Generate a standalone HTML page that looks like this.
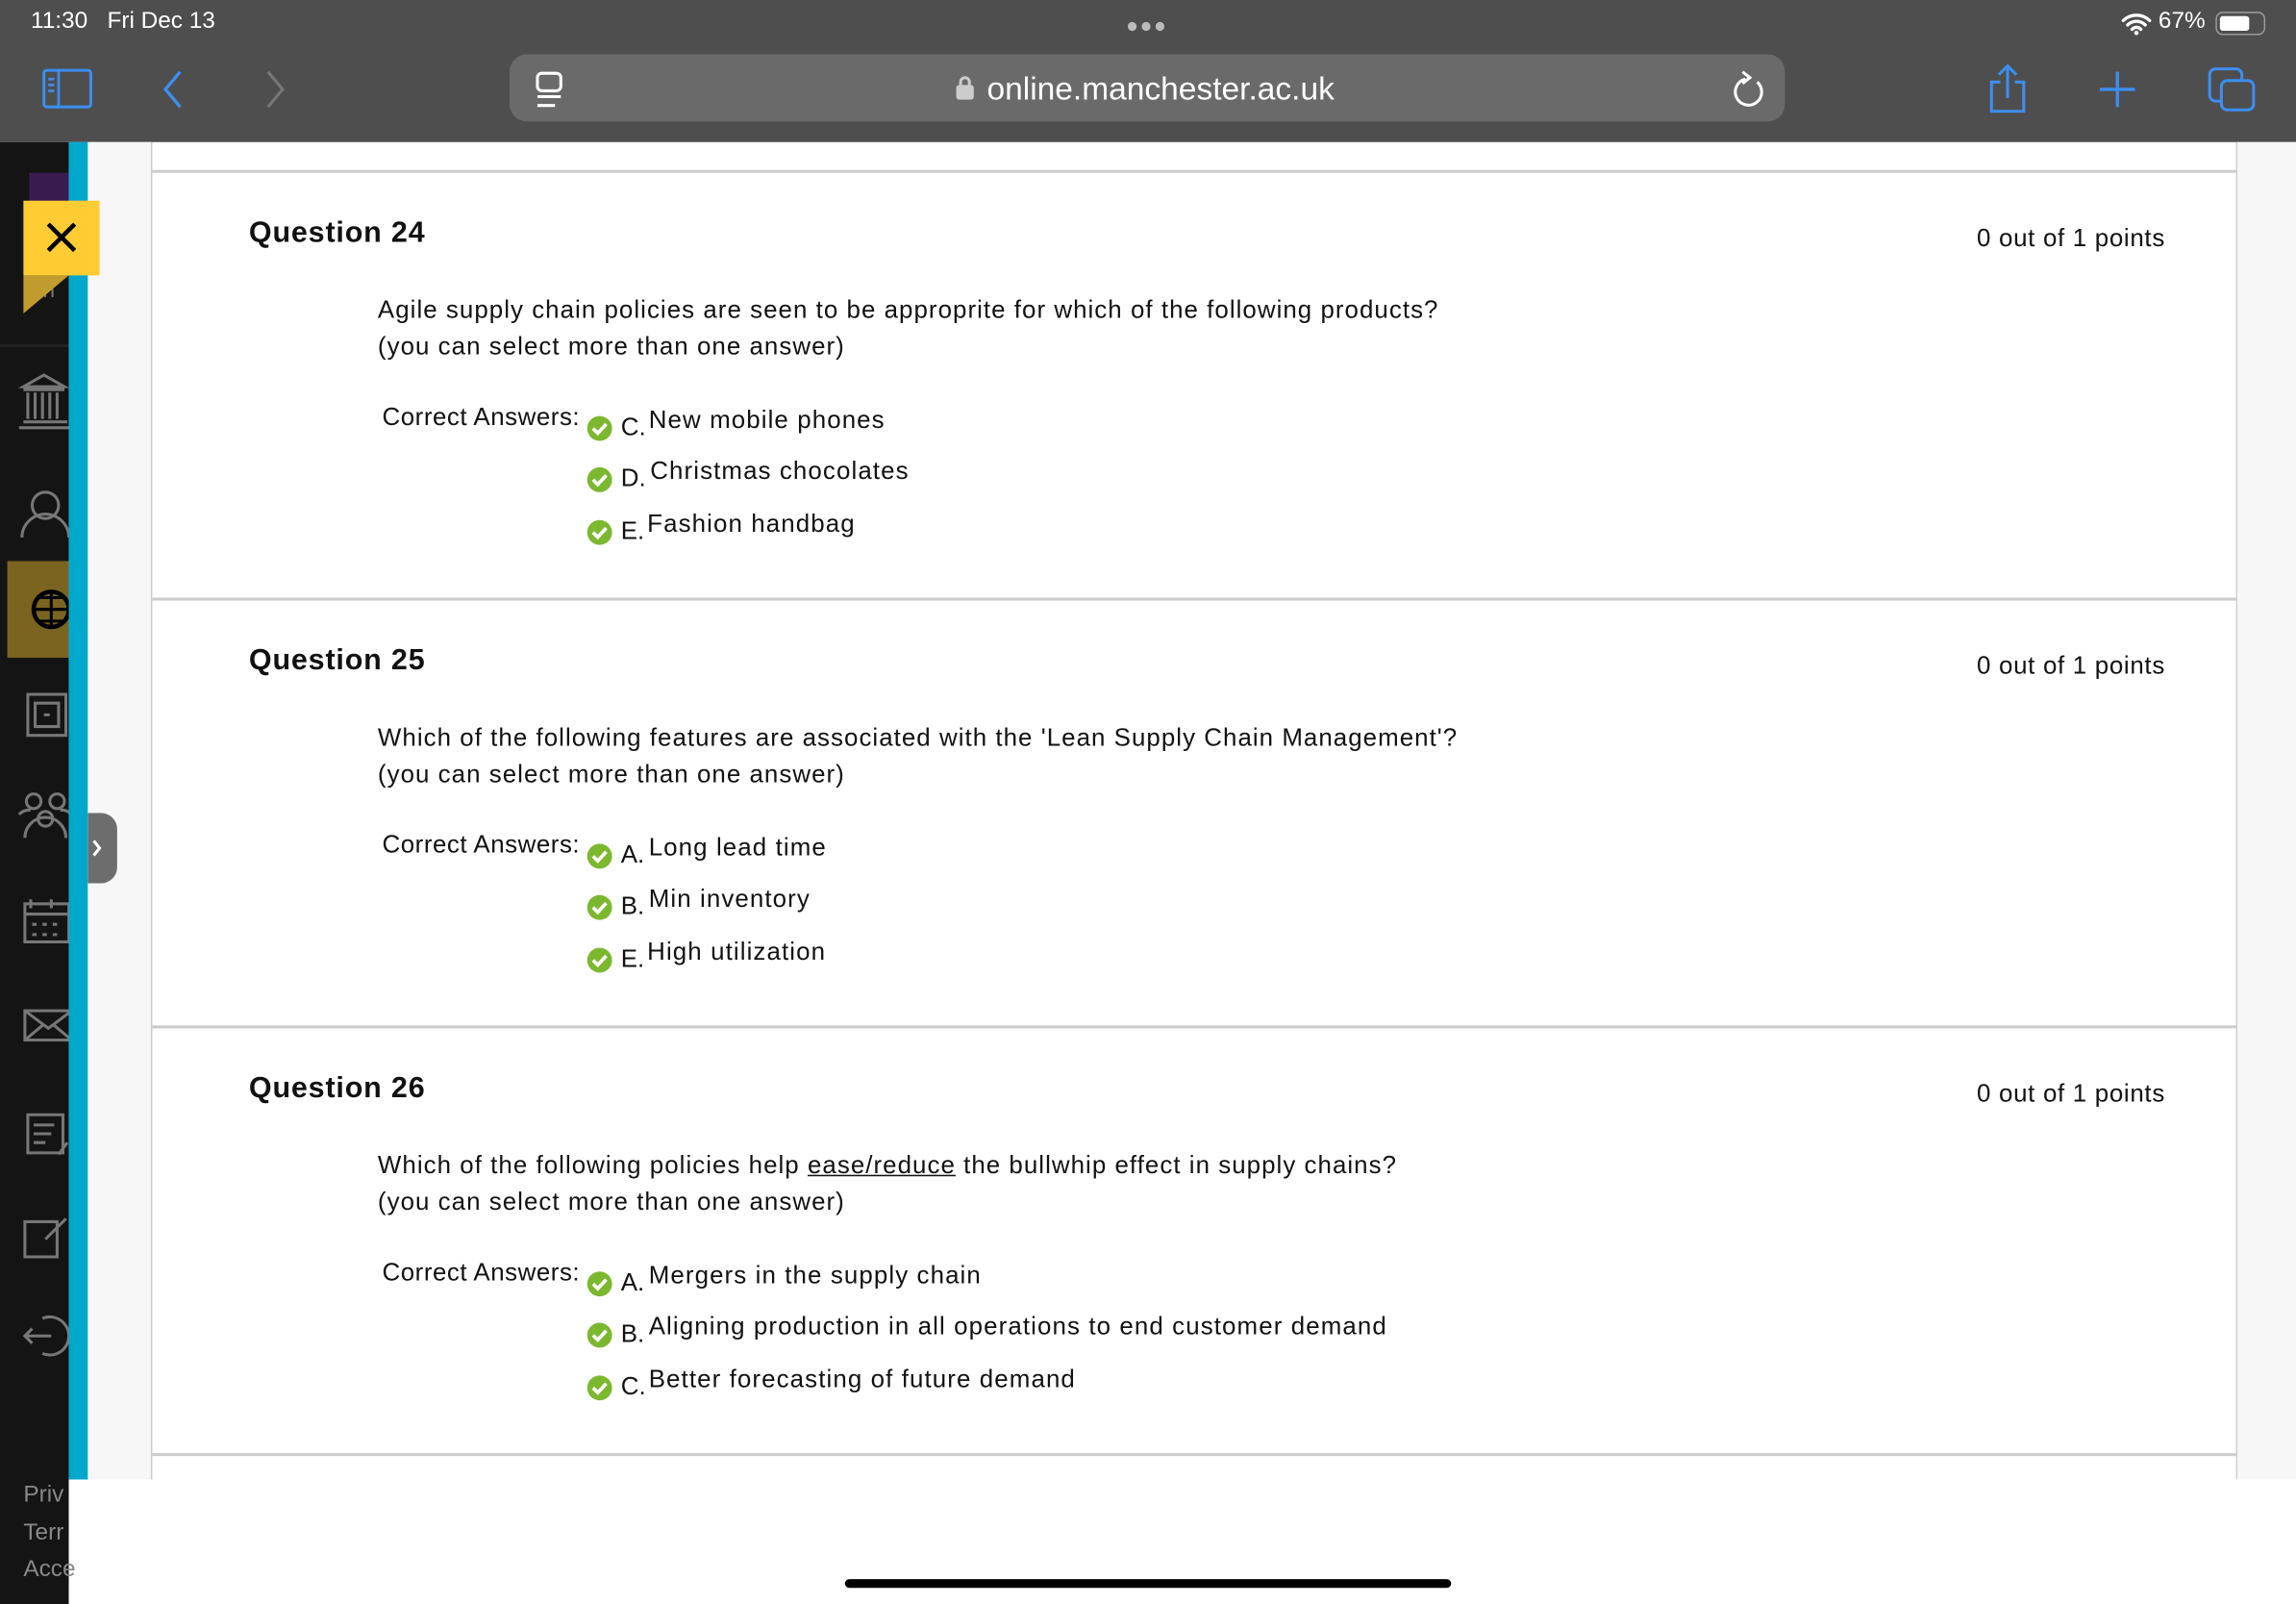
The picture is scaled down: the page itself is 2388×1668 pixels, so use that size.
<!DOCTYPE html>
<html><head><meta charset="utf-8">
<style>
*{margin:0;padding:0;box-sizing:border-box}
html,body{width:2388px;height:1668px;overflow:hidden;background:#fff}
#s{position:absolute;left:0;top:0;width:1568px;height:1095px;transform:scale(1.523,1.5233);transform-origin:0 0;font-family:"Liberation Sans",sans-serif;color:#111}
.a{position:absolute}
.top{left:0;top:0;width:1568px;height:97px;background:#4e4e4e}
.st{color:#fff;font-size:16px;top:6px}
.url{left:348px;top:37px;width:871px;height:46px;background:#6a6a6a;border-radius:12px}
.q{position:absolute;left:104px;width:1423px;height:292px}
.q h2{position:absolute;left:66px;top:29px;font-size:20px;font-weight:bold;line-height:24px;letter-spacing:0.55px}
.pts{position:absolute;left:1246px;top:35px;font-size:17px;line-height:20px;letter-spacing:0.45px}
.qt{position:absolute;left:154px;top:81px;font-size:17px;line-height:25px;letter-spacing:0.68px}
.lab{position:absolute;left:157px;top:157px;font-size:17px;line-height:20px;letter-spacing:0.35px}
.ans{position:absolute;left:296px;font-size:17px;line-height:20px;height:36px;width:800px;letter-spacing:0.72px}
.ans svg{position:absolute;left:0;top:7px}
.ans .l{position:absolute;left:24px;top:6px;letter-spacing:0}
.ans .t{position:absolute;left:43px;top:1px}
</style></head><body><div id="s">
<div class="a top"></div>
<div class="a st" style="left:21px">11:30&nbsp;&nbsp;&nbsp;Fri Dec 13</div>
<div class="a" style="left:769px;top:9px;color:#bbb;font-size:14px;letter-spacing:1px">●●●</div>
<div class="a st" style="left:1474px">67%</div>
<svg class="a" style="left:1448px;top:8px" width="22" height="16" viewBox="0 0 22 16"><path d="M2 6a13 13 0 0 1 18 0M5 9a8.5 8.5 0 0 1 12 0M8 12a4 4 0 0 1 6 0" stroke="#fff" stroke-width="2.2" fill="none" stroke-linecap="round"/><circle cx="11" cy="14.5" r="1.5" fill="#fff"/></svg>
<div class="a" style="left:1513px;top:8px;width:34px;height:16px;border:1.5px solid #999;border-radius:5px"></div>
<div class="a" style="left:1516px;top:11px;width:20px;height:10px;background:#fff;border-radius:2px"></div>
<svg class="a" style="left:28px;top:46px" width="38" height="30" viewBox="0 0 38 30"><rect x="2" y="2" width="32" height="25" rx="2" stroke="#3d8ef0" stroke-width="2" fill="none"/><path d="M12 2v25M5 8h4M5 12h4M5 16h4" stroke="#3d8ef0" stroke-width="1.8"/></svg>
<svg class="a" style="left:108px;top:46px" width="20" height="30"><path d="M15 3L5 15l10 12" stroke="#3d8ef0" stroke-width="2.2" fill="none"/></svg>
<svg class="a" style="left:178px;top:46px" width="20" height="30"><path d="M5 3l10 12L5 27" stroke="#777" stroke-width="2" fill="none"/></svg>
<div class="a url"></div>
<svg class="a" style="left:364px;top:47px" width="24" height="28"><rect x="3" y="3" width="16" height="12" rx="3" stroke="#fff" stroke-width="2" fill="none"/><path d="M3 19h16M3 25h12" stroke="#fff" stroke-width="2"/></svg>
<svg class="a" style="left:652px;top:51px" width="14" height="18"><rect x="1" y="7" width="12" height="10" rx="2" fill="#ccc"/><path d="M4 7V5a3 3 0 0 1 6 0v2" stroke="#ccc" stroke-width="2" fill="none"/></svg>
<div class="a" style="left:674px;top:48px;color:#fff;font-size:22px">online.manchester.ac.uk</div>
<svg class="a" style="left:1182px;top:47px" width="26" height="28"><path d="M18 9a9 9 0 1 1-8-2" stroke="#fff" stroke-width="2" fill="none"/><path d="M8 2l5 4-5 4" stroke="#fff" stroke-width="2" fill="none"/></svg>
<svg class="a" style="left:1356px;top:42px" width="30" height="36"><path d="M15 3v22M9 9l6-6 6 6M10 14H4v20h22V14h-6" stroke="#3d8ef0" stroke-width="2" fill="none"/></svg>
<svg class="a" style="left:1432px;top:46px" width="28" height="30"><path d="M14 3v24M2 15h24" stroke="#3d8ef0" stroke-width="2.2"/></svg>
<svg class="a" style="left:1506px;top:44px" width="36" height="34"><rect x="3" y="3" width="22" height="22" rx="4" stroke="#3d8ef0" stroke-width="2" fill="none"/><rect x="11" y="11" width="22" height="20" rx="4" stroke="#3d8ef0" stroke-width="2" fill="#4e4e4e"/></svg>

<div class="a" style="left:0;top:97px;width:47px;height:998px;background:#141414"></div>
<div class="a" style="left:20px;top:118px;width:27px;height:20px;background:#3a1b4f"></div>
<div class="a" style="left:0;top:235px;width:47px;height:2px;background:#222"></div>
<div class="a" style="left:20px;top:190px;color:#777;font-size:15px">Th</div>
<div class="a" style="left:5px;top:383px;width:42px;height:66px;background:#7a6420"></div>
<div class="a" style="left:47px;top:97px;width:13px;height:913px;background:#00a8cc"></div>
<div class="a" style="left:60px;top:97px;width:43px;height:913px;background:#f7f7f7"></div>
<div class="a" style="left:103px;top:97px;width:1px;height:913px;background:#ccc"></div>
<div class="a" style="left:1527px;top:97px;width:1px;height:913px;background:#ccc"></div>
<div class="a" style="left:1528px;top:97px;width:40px;height:913px;background:#f7f7f7"></div>
<div class="a" style="left:104px;top:116px;width:1423px;height:2px;background:#ccc"></div>
<div class="a" style="left:104px;top:408px;width:1423px;height:2px;background:#ccc"></div>
<div class="a" style="left:104px;top:700px;width:1423px;height:2px;background:#ccc"></div>
<div class="a" style="left:104px;top:992px;width:1423px;height:2px;background:#ccc"></div>
<div class="a" style="left:47px;top:1010px;width:1521px;height:85px;background:#fff"></div>
<div class="a" style="left:16px;top:188px;width:0;height:0;border-left:31px solid #c19b2e;border-bottom:26px solid transparent"></div>
<div class="a" style="left:16px;top:137px;width:52px;height:51px;background:#ffcc33"></div>
<svg class="a" style="left:30px;top:150px" width="24" height="24"><path d="M3 3l18 18M21 3L3 21" stroke="#000" stroke-width="3"/></svg>
<svg class="a" style="left:60px;top:555px" width="21" height="48"><path d="M0 0h9a11 11 0 0 1 11 11v26a11 11 0 0 1-11 11H0z" fill="#6d6d6d"/><path d="M4 19l4 5-4 5" stroke="#fff" stroke-width="2" fill="none"/></svg>
<svg class="a" style="left:0;top:250px" width="47" height="700" fill="none" stroke="#777" stroke-width="2">
<path d="M16 14l14-8 14 8zM16 16h28M19 18v18M24 18v18M29 18v18M34 18v18M39 18v18M16 38h30M13 42h34"/>
<circle cx="31" cy="95" r="9"/><path d="M15 117a16 16 0 0 1 32 0"/>
<circle cx="35" cy="166" r="12" stroke="#000" stroke-width="3"/><path d="M23 166h24M35 154v24M27 158h16M27 174h16" stroke="#000" stroke-width="2"/>
<rect x="19" y="224" width="26" height="28"/><path d="M24 230h16v16H24zM30 238h4"/>
<circle cx="23" cy="297" r="5"/><circle cx="39" cy="297" r="5"/><circle cx="31" cy="309" r="5"/><path d="M17 322a14 14 0 0 1 28 0M13 306a10 10 0 0 1 8-3M41 303a10 10 0 0 1 8 3"/>
<rect x="17" y="367" width="30" height="26"/><path d="M17 374h30M21 364v6M35 364v6M22 381h3M29 381h3M36 381h3M22 388h3M29 388h3M36 388h3"/>
<rect x="17" y="440" width="32" height="20"/><path d="M17 440l16 12 16-12M17 460l12-10M49 460l-12-10"/>
<path d="M19 511h24v26H19zM23 518h14M23 524h12M23 530h8M40 538l6-8"/>
<path d="M17 584h22v24H17zM31 596l14-14"/>
<path d="M29 650a13 13 0 1 1 0 24M17 662h18M22 657l-5 5 5 5"/>
</svg>
<div class="a" style="left:16px;top:1008px;color:#888;font-size:16px;line-height:25.5px">Priv<br>Terr<br>Acce</div>
<div class="a" style="left:577px;top:1078px;width:414px;height:6px;background:#000;border-radius:3px"></div>

<div class="q" style="top:118px">
<h2>Question 24</h2><div class="pts">0 out of 1 points</div>
<div class="qt">Agile supply chain policies are seen to be approprite for which of the following products?<br>(you can select more than one answer)</div>
<div class="lab">Correct Answers:</div>
<div class="ans" style="top:158px"><svg width="19" height="19"><circle cx="9.5" cy="9.5" r="8.5" fill="#7cb82f"/><path d="M5 9.5l3.2 3.2L14 6.5" stroke="#fff" stroke-width="2.4" fill="none"/></svg><span class="l">C.</span><span class="t">New mobile phones</span></div>
<div class="ans" style="top:193px"><svg width="19" height="19"><circle cx="9.5" cy="9.5" r="8.5" fill="#7cb82f"/><path d="M5 9.5l3.2 3.2L14 6.5" stroke="#fff" stroke-width="2.4" fill="none"/></svg><span class="l">D.</span><span class="t" style="left:44px">Christmas chocolates</span></div>
<div class="ans" style="top:229px"><svg width="19" height="19"><circle cx="9.5" cy="9.5" r="8.5" fill="#7cb82f"/><path d="M5 9.5l3.2 3.2L14 6.5" stroke="#fff" stroke-width="2.4" fill="none"/></svg><span class="l">E.</span><span class="t" style="left:42px">Fashion handbag</span></div>
</div>
<div class="q" style="top:410px">
<h2>Question 25</h2><div class="pts">0 out of 1 points</div>
<div class="qt">Which of the following features are associated with the 'Lean Supply Chain Management'?<br>(you can select more than one answer)</div>
<div class="lab">Correct Answers:</div>
<div class="ans" style="top:158px"><svg width="19" height="19"><circle cx="9.5" cy="9.5" r="8.5" fill="#7cb82f"/><path d="M5 9.5l3.2 3.2L14 6.5" stroke="#fff" stroke-width="2.4" fill="none"/></svg><span class="l">A.</span><span class="t">Long lead time</span></div>
<div class="ans" style="top:193px"><svg width="19" height="19"><circle cx="9.5" cy="9.5" r="8.5" fill="#7cb82f"/><path d="M5 9.5l3.2 3.2L14 6.5" stroke="#fff" stroke-width="2.4" fill="none"/></svg><span class="l">B.</span><span class="t">Min inventory</span></div>
<div class="ans" style="top:229px"><svg width="19" height="19"><circle cx="9.5" cy="9.5" r="8.5" fill="#7cb82f"/><path d="M5 9.5l3.2 3.2L14 6.5" stroke="#fff" stroke-width="2.4" fill="none"/></svg><span class="l">E.</span><span class="t" style="left:42px">High utilization</span></div>
</div>
<div class="q" style="top:702px">
<h2>Question 26</h2><div class="pts">0 out of 1 points</div>
<div class="qt">Which of the following policies help <u>ease/reduce</u> the bullwhip effect in supply chains?<br>(you can select more than one answer)</div>
<div class="lab">Correct Answers:</div>
<div class="ans" style="top:158px"><svg width="19" height="19"><circle cx="9.5" cy="9.5" r="8.5" fill="#7cb82f"/><path d="M5 9.5l3.2 3.2L14 6.5" stroke="#fff" stroke-width="2.4" fill="none"/></svg><span class="l">A.</span><span class="t">Mergers in the supply chain</span></div>
<div class="ans" style="top:193px"><svg width="19" height="19"><circle cx="9.5" cy="9.5" r="8.5" fill="#7cb82f"/><path d="M5 9.5l3.2 3.2L14 6.5" stroke="#fff" stroke-width="2.4" fill="none"/></svg><span class="l">B.</span><span class="t">Aligning production in all operations to end customer demand</span></div>
<div class="ans" style="top:229px"><svg width="19" height="19"><circle cx="9.5" cy="9.5" r="8.5" fill="#7cb82f"/><path d="M5 9.5l3.2 3.2L14 6.5" stroke="#fff" stroke-width="2.4" fill="none"/></svg><span class="l">C.</span><span class="t">Better forecasting of future demand</span></div>
</div>
</div></body></html>
